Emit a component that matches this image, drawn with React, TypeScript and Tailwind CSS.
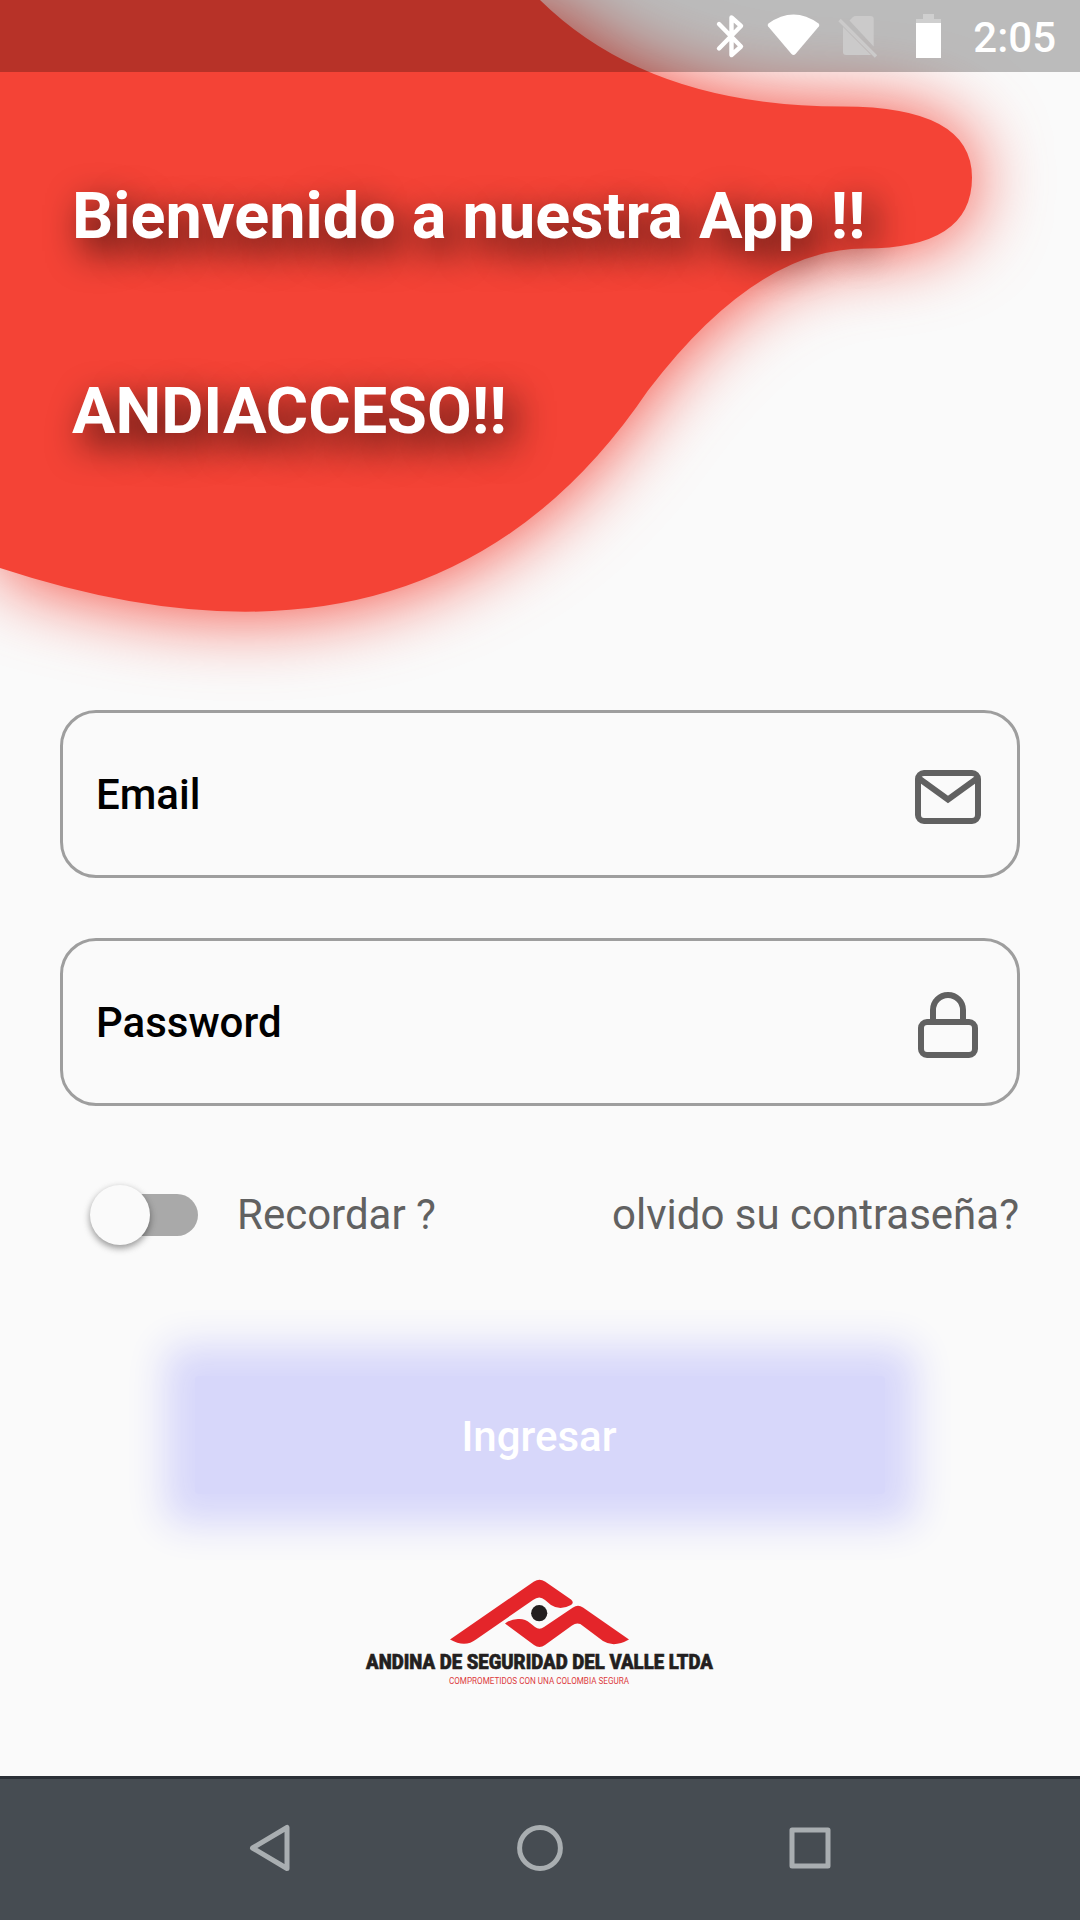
import type { ReactNode } from "react";

const BLOB =
  "M0 0 H540 Q648 106.5 842.4 106.5 Q972 106.5 972 177.5 Q972 248.5 864 248.5 Q756 248.5 648 390.5 Q432 710 0 568 Z";

function HeaderBlob() {
  return (
    <svg className="pointer-events-none absolute left-0 top-0" width="1080" height="800" viewBox="0 0 1080 800">
      <defs>
        <filter id="glow" filterUnits="userSpaceOnUse" x="-150" y="-150" width="1380" height="1060" colorInterpolationFilters="sRGB">
          <feGaussianBlur stdDeviation="37" />
        </filter>
      </defs>
      <path d={BLOB} fill="#f44336" filter="url(#glow)" transform="translate(0 1)" />
      <path d={BLOB} fill="#f44336" />
    </svg>
  );
}

function StatusBar() {
  return (
    <header className="relative flex h-[72px] items-center justify-end bg-black/25 pr-[24px] text-white">
      <svg width="240" height="72" viewBox="710 0 240 72" className="mr-[23px]">
        <path d="M719 24 L741 46.5 L731.5 55 V17.5 L741 26 L719 48.5" fill="none" stroke="#fff" strokeWidth="4.4" strokeLinejoin="round" strokeLinecap="round" />
        <path d="M768.4 23.5 Q793.5 5.5 818.6 23.5 Q820 25 818.8 26.5 L795.5 54 Q793.5 56 791.5 54 L768.2 26.5 Q767 25 768.4 23.5 Z" fill="#fff" />
        <g fill="#cbcaca">
          <path d="M849.5 20.5 L853 17 Q854 16 856 16 H870.5 Q873.7 16 873.7 19 V46.5 Z" />
          <path d="M843 27 L871 55 H846 Q843 55 843 52 Z" />
        </g>
        <path d="M839.5 20 L876 56.5" stroke="#cbcaca" strokeWidth="3.4" />
        <path d="M923 14 H934 V19 H941 V23 H916 V19 H923 Z" fill="#cfcfcf" />
        <rect x="916" y="23" width="25" height="35" fill="#fff" />
      </svg>
      <span className="pt-[3px] text-[42px] font-medium leading-none">2:05</span>
    </header>
  );
}

function Field({ label, children }: { label: string; children: ReactNode }) {
  return (
    <label className="flex h-[168px] items-center justify-between rounded-[36px] border-[3px] border-[#9e9e9e] pl-[33px] pr-[33px]">
      <span className="pt-[2px] text-[42px] font-medium leading-none text-black">{label}</span>
      {children}
    </label>
  );
}

function MailIcon() {
  return (
    <svg width="72" height="72" viewBox="912 758 72 72" fill="none" stroke="#616161" strokeWidth="6">
      <rect x="918" y="773" width="60" height="48" rx="6" />
      <path d="M919 778.5 L948 799.5 L977 778.5" />
    </svg>
  );
}

function LockIcon() {
  return (
    <svg width="72" height="72" viewBox="912 986 72 72" fill="none" stroke="#616161" strokeWidth="6">
      <rect x="921" y="1022" width="54" height="33" rx="6" />
      <path d="M933 1022 V1010 A15 15 0 0 1 963 1010 V1022" />
    </svg>
  );
}

function Toggle() {
  return (
    <span className="relative flex h-[60px] w-[108px] items-center justify-end">
      <span className="h-[42px] w-[99px] rounded-full bg-[#a9a9a9]" />
      <span className="absolute left-0 top-0 size-[60px] rounded-full bg-[#fafafa] shadow-[0_3px_6px_rgba(0,0,0,0.3),0_3px_10px_rgba(0,0,0,0.14)]" />
    </span>
  );
}

function Logo() {
  return (
    <svg width="400" height="120" viewBox="340 1570 400 120" className="mx-auto block overflow-visible">
      <g fill="#e4252a">
        <path d="M450 1639.5 L534 1581.5 Q539.5 1578 545 1581.5 L571 1599.5 Q574.5 1602.5 571 1605 Q560 1611 551 1605 L545 1600 Q539.5 1595 533 1600 L476 1639.5 Q465 1648 450 1639.5 Z" />
        <path d="M505 1623.5 Q511 1619 518 1619 Q525 1618.5 530 1623 L535 1627 Q539.5 1630.5 544 1627 L573 1607.5 Q578 1604 583 1607.5 L629 1639.5 Q614 1648 603 1641 L583 1626 Q578 1621.5 572 1625.5 L545 1645 Q539.5 1649 534 1645 Z" />
      </g>
      <circle cx="539.2" cy="1613.2" r="8.1" fill="#231f20" />
      <text x="366" y="1669" textLength="347" lengthAdjust="spacingAndGlyphs" fontSize="20.2" fontWeight="900" fill="#231f20" stroke="#231f20" strokeWidth="0.6">
        ANDINA DE SEGURIDAD DEL VALLE LTDA
      </text>
      <text x="449" y="1684" textLength="180" lengthAdjust="spacingAndGlyphs" fontSize="9.9" fontWeight="400" fill="#dc3a40">
        COMPROMETIDOS CON UNA COLOMBIA SEGURA
      </text>
    </svg>
  );
}

function NavBar() {
  return (
    <nav className="flex h-[144px] items-center justify-center gap-[210px] border-t-[3px] border-[#2b3037] bg-[#464c52] pb-[3px]">
      <svg width="60" height="60" viewBox="240 1818 60 60" fill="none" stroke="#a9aeb1" strokeWidth="5" strokeLinejoin="round">
        <path d="M287 1827.5 V1868.5 L252.5 1848 Z" />
      </svg>
      <svg width="60" height="60" viewBox="510 1818 60 60" fill="none" stroke="#a9aeb1" strokeWidth="5">
        <circle cx="540" cy="1848" r="20.4" />
      </svg>
      <svg width="60" height="60" viewBox="780 1818 60 60" fill="none" stroke="#a9aeb1" strokeWidth="5" strokeLinejoin="round">
        <rect x="792" y="1830" width="36" height="36" />
      </svg>
    </nav>
  );
}

export default function App() {
  return (
    <div className="relative flex h-[1920px] w-[1080px] flex-col overflow-hidden bg-[#fafafa] font-['Roboto',sans-serif]">
      <HeaderBlob />
      <StatusBar />
      <section className="relative flex h-[638px] flex-col gap-[119px] pl-[72px] pt-[106px] text-[64.8px] font-bold leading-[76px] text-white [text-shadow:10px_13px_37px_rgba(0,0,0,0.92)]">
        <h1>Bienvenido a nuestra App !!</h1>
        <h1>ANDIACCESO!!</h1>
      </section>
      <main className="relative flex flex-1 flex-col px-[60px]">
        <div className="flex flex-col gap-[60px]">
          <Field label="Email">
            <MailIcon />
          </Field>
          <Field label="Password">
            <LockIcon />
          </Field>
        </div>
        <div className="mt-[78.5px] flex h-[60px] items-center pl-[30px] text-[42px] leading-none text-[#616161]">
          <Toggle />
          <span className="ml-[39px]">Recordar ?</span>
          <span className="ml-auto mr-px">olvido su contraseña?</span>
        </div>
        <div className="mt-[131.5px] flex justify-center">
          <button className="h-[118px] w-[690px] rounded-[4px] bg-[#d7d7fa] pr-[2px] pt-[4px] text-[42px] font-medium leading-none text-white shadow-[0_0_38px_30px_#d7d7fa]">
            Ingresar
          </button>
        </div>
        <div className="mt-[76px]">
          <Logo />
        </div>
      </main>
      <NavBar />
    </div>
  );
}
